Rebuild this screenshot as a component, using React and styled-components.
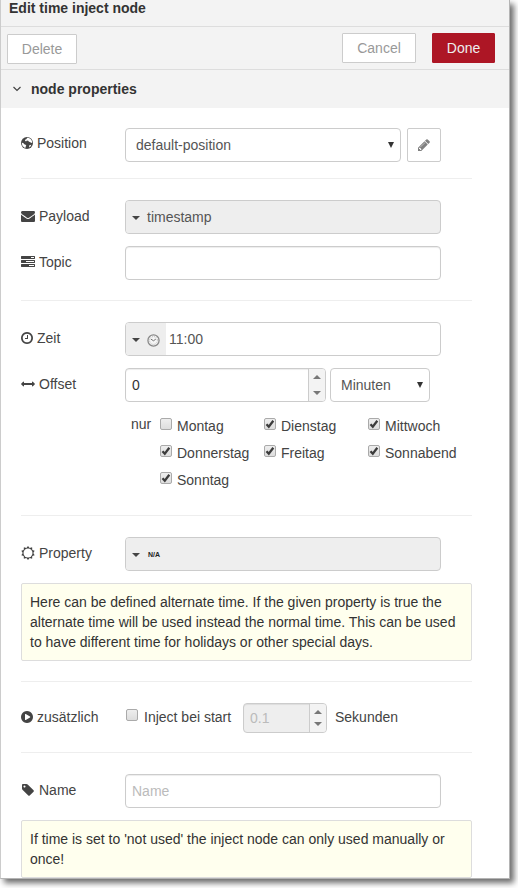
import React from 'react';
import styled, { createGlobalStyle, css } from 'styled-components';

const GlobalStyle = createGlobalStyle`
  *, *::before, *::after { box-sizing: border-box; }
  body {
    margin: 0;
    background: #fff;
    font: 14px/20px "Liberation Sans", Arial, sans-serif;
    color: #444;
    overflow: hidden;
  }
`;

const Panel = styled.main`
  width: 510px;
  height: 879px;
  overflow: hidden;
  background: #fff;
  border: 1px solid #ccc;
  border-top: 0;
  border-right-color: #b4b4b4;
  border-bottom-color: #b4b4b4;
`;

const Stage = styled.div`
  width: 518px;
  height: 888px;
  overflow: hidden;
  ${Panel} { box-shadow: 4px 4px 6px rgba(0, 0, 0, 0.58); }
`;

const Title = styled.h1`
  margin: 0;
  height: 27px;
  padding: 0 8px;
  background: #f3f3f3;
  border-bottom: 1px solid #ddd;
  font-size: 14px;
  line-height: 17px;
  color: #333;
`;

const Toolbar = styled.div`
  display: flex;
  height: 43px;
  padding: 6px 14px 0 6px;
  background: #f3f3f3;
  border-bottom: 1px solid #ddd;
`;

const Button = styled.button`
  width: ${(p) => p.$width}px;
  height: 30px;
  margin: ${(p) => p.$margin || '0'};
  padding: 0;
  font: inherit;
  color: ${(p) => (p.$primary ? '#eee' : '#999')};
  background: ${(p) => (p.$primary ? '#ad1625' : '#fff')};
  border: 1px solid ${(p) => (p.$primary ? '#ad1625' : '#ccc')};
  border-radius: 1px;
`;

const SectionHeader = styled.h2`
  display: flex;
  align-items: center;
  gap: 8px;
  margin: 0;
  height: 38px;
  padding-left: 10px;
  background: #f3f3f3;
  font-size: 14px;
  color: #333;
`;

const Form = styled.div`
  width: 471px;
  padding: 20px 0 0 20px;
`;

const Row = styled.div`
  display: flex;
  height: ${(p) => p.$height || 34}px;
  margin-bottom: 12px;
`;

const Label = styled.label`
  display: flex;
  align-items: center;
  flex: none;
  width: 104px;
  height: ${(p) => p.$height || 32}px;
  gap: 4px;
`;

const Divider = styled.hr`
  height: 1px;
  margin: ${(p) => p.$top || 20}px 0 21px;
  border: 0;
  background: #eee;
`;

const field = css`
  display: flex;
  align-items: center;
  width: ${(p) => p.$width || 316}px;
  height: ${(p) => p.$height || 34}px;
  border: 1px solid #ccc;
  border-radius: 4px;
  overflow: hidden;
  color: #555;
`;

const Select = styled.div`
  ${field}
  justify-content: space-between;
  padding: 0 6px 0 10px;
  margin-left: ${(p) => p.$gap || 0}px;
`;

const TextField = styled.div`
  ${field}
  padding: 0 6px;
  color: ${(p) => (p.$placeholder ? '#bbb' : '#333')};
  box-shadow: inset 0 1px 1px rgba(0, 0, 0, 0.075);
`;

const TypedField = styled.div`
  ${field}
  background: ${(p) => (p.$filled ? '#eee' : '#fff')};
`;

const TypeToggle = styled.span`
  display: flex;
  align-items: center;
  gap: 7px;
  height: 100%;
  padding: 2px ${(p) => (p.$plain ? 7 : 6)}px 0 6px;
  margin-right: ${(p) => (p.$plain ? 0 : 3)}px;
  background: #eee;
`;

const TinyText = styled.span`
  margin: 2px 0 0 1px;
  color: #222;
  font-size: 7px;
  font-weight: bold;
  line-height: 10px;
`;

const IconButton = styled.button`
  display: grid;
  place-items: center;
  width: 34px;
  height: 34px;
  margin-left: 6px;
  padding: 0;
  background: #fff;
  border: 1px solid #ccc;
  border-radius: 2px;
  color: #808080;
`;

const Spinner = styled.div`
  ${field}
  margin-left: ${(p) => p.$gap || 0}px;
  background: ${(p) => (p.$disabled ? '#eee' : '#fff')};
  color: ${(p) => (p.$disabled ? '#bbb' : '#333')};
  box-shadow: inset 0 1px 1px rgba(0, 0, 0, 0.075);
`;

const SpinnerValue = styled.span`
  flex: 1;
  padding-left: 6px;
`;

const SpinnerButtons = styled.span`
  display: flex;
  flex-direction: column;
  align-items: center;
  justify-content: space-between;
  width: 17px;
  height: 100%;
  padding: 6px 1px 6px 0;
  background: #f3f3f3;
  border-left: 1px solid #ccc;
`;

const Days = styled.div`
  display: grid;
  grid-template-columns: 29px 104px 104px 104px;
  grid-auto-rows: 27px;
  height: 81px;
  margin-left: 110px;
`;

const DayPrefix = styled.span``;

const DayLabel = styled.label`
  display: flex;
  align-items: flex-start;
  gap: 5px;
  grid-column: ${(p) => p.$column};
  padding-top: 2px;
`;

const Box = styled.span`
  display: grid;
  place-items: center;
  flex: none;
  width: 12px;
  height: 12px;
  margin-top: 2px;
  border: 1px solid #aaa;
  border-radius: 2px;
  background: linear-gradient(#eee, #ddd);
`;

const StartLabel = styled.label`
  display: flex;
  width: 119px;
  gap: 6px;
  padding: 4px 0 0 1px;
  white-space: nowrap;
`;

const Unit = styled.span`
  padding: 4px 0 0 8px;
`;

const Notice = styled.p`
  width: 451px;
  margin: 0;
  padding: 8px;
  background: #ffe;
  border: 1px solid #ddd;
  border-radius: 2px;
  color: #333;
  white-space: nowrap;
`;

const Svg = styled.svg`
  display: block;
  flex: none;
  fill: currentColor;
`;

const PATHS = {
  clock: 'M1024 544v448q0 14-9 23t-23 9h-320q-14 0-23-9t-9-23v-64q0-14 9-23t23-9h224v-352q0-14 9-23t23-9h64q14 0 23 9t9 23zm416 352q0-148-73-273t-198-198-273-73-273 73-198 198-73 273 73 273 198 198 273 73 273-73 198-198 73-273zm224 0q0 209-103 385.5t-279.5 279.5-385.5 103-385.5-103-279.5-279.5-103-385.5 103-385.5 279.5-279.5 385.5-103 385.5 103 279.5 279.5 103 385.5z',
  envelope: 'M1792 710v794q0 66-47 113t-113 47h-1472q-66 0-113-47t-47-113v-794q44 49 101 87 362 246 497 345 57 42 92.5 65.5t94.5 48 110 24.5h2q51 0 110-24.5t94.5-48 92.5-65.5q170-123 498-345 57-39 100-87zm0-294q0 79-49 151t-122 123q-376 261-468 325-10 7-42.5 31t-54 38.5-52 32.5-57.5 27-50 9h-2q-23 0-50-9t-57.5-27-52-32.5-54-38.5-42.5-31q-91-64-262-182.5t-205-142.5q-62-42-117-115.5t-55-136.5q0-78 41.5-130t118.5-52h1472q65 0 112.5 47t47.5 113z',
  tasks: 'M1024 1408h640v-128h-640v128zm-384-512h1024v-128h-1024v128zm640-512h384v-128h-384v128zm512 832v256q0 26-19 45t-45 19h-1664q-26 0-45-19t-19-45v-256q0-26 19-45t45-19h1664q26 0 45 19t19 45zm0-512v256q0 26-19 45t-45 19h-1664q-26 0-45-19t-19-45v-256q0-26 19-45t45-19h1664q26 0 45 19t19 45zm0-512v256q0 26-19 45t-45 19h-1664q-26 0-45-19t-19-45v-256q0-26 19-45t45-19h1664q26 0 45 19t19 45z',
  arrows: 'M1792 896q0 26-19 45l-256 256q-19 19-45 19t-45-19-19-45v-128h-1024v128q0 26-19 45t-45 19-45-19l-256-256q-19-19-19-45t19-45l256-256q19-19 45-19t45 19 19 45v128h1024v-128q0-26 19-45t45-19 45 19l256 256q19 19 19 45z',
  play: 'M896 128q209 0 385.5 103t279.5 279.5 103 385.5-103 385.5-279.5 279.5-385.5 103-385.5-103-279.5-279.5-103-385.5 103-385.5 279.5-279.5 385.5-103zm384 823q32-18 32-55t-32-55l-544-320q-31-19-64-1-32 19-32 56v640q0 37 32 56 16 8 32 8 17 0 32-9z',
  tag: 'M576 448q0-53-37.5-90.5t-90.5-37.5-90.5 37.5-37.5 90.5 37.5 90.5 90.5 37.5 90.5-37.5 37.5-90.5zm1067 576q0 53-37 90l-491 492q-39 37-91 37-53 0-90-37l-715-716q-38-37-64.5-101t-26.5-117v-416q0-52 38-90t90-38h416q53 0 117 26.5t102 64.5l715 714q37 39 37 91z',
  pencil: 'M491 1536l91-91-235-235-91 91v107h128v128h107zm523-928q0-22-22-22-10 0-17 7l-542 542q-7 7-7 17 0 22 22 22 10 0 17-7l542-542q7-7 7-17zm-54-192l416 416-832 832h-416v-416zm683 96q0 53-37 90l-166 166-416-416 166-165q36-38 90-38 53 0 91 38l235 234q37 39 37 91z',
};

const Icon = ({ name, narrow }) => (
  <Svg width={narrow ? 12 : 14} height="14" viewBox={narrow ? '128 0 1536 1792' : '0 0 1792 1792'}>
    <path d={PATHS[name]} />
  </Svg>
);

const Globe = () => (
  <Svg width="12" height="14" viewBox="0 -1 12 14">
    <circle cx="6" cy="6" r="6" />
    <path fill="#fff" d="M6.300.7 8 1l1.900 1.200 1.100 1.900.3 1.500-1.200.3-1-.9-1.200-.2-.6-1-1.400-.2-.9.8-1.100-.8.8-1.300 1.300-.3-.5-.7z" />
    <path fill="#fff" d="m.8 5.800 1.400.2 1.100 1.200 1.300.5.7 1-.7 1.100-.2 1.300-1.500-.8L1.300 8.600zM8.300 8.300l2-.6-.8 1.800-1.400 1z" />
  </Svg>
);

const SUN_POINTS = Array.from({ length: 20 }, (_, i) => {
  const r = i % 2 ? 5.3 : 7;
  const a = (i * Math.PI) / 10;
  return `${(7 + r * Math.sin(a)).toFixed(2)},${(7 - r * Math.cos(a)).toFixed(2)}`;
}).join(' ');

const Sun = () => (
  <Svg width="14" height="14" viewBox="0 0 14 14">
    <polygon points={SUN_POINTS} />
    <circle cx="7" cy="7" r="4.5" fill="#fff" />
  </Svg>
);

const Chevron = () => (
  <Svg width="12" height="8" viewBox="0 0 12 8">
    <path d="m2.5 2 3.5 3.5L9.500 2" fill="none" stroke="#444" strokeWidth="1.2" />
  </Svg>
);

const Caret = () => (
  <Svg width="8" height="4" viewBox="0 0 8 4"><path d="M0 0h8L4 4z" fill="#444" /></Svg>
);

const SelectArrow = () => (
  <Svg width="6" height="8" viewBox="0 0 6 8"><path d="M0 1h6L3 7z" fill="#333" /></Svg>
);

const Step = ({ down }) => (
  <Svg width="8" height="4" viewBox="0 0 8 4">
    <path d={down ? 'M0 0h8L4 4z' : 'M0 4h8L4 0z'} fill="#777" />
  </Svg>
);

const ClockFace = () => (
  <Svg width="13" height="13" viewBox="0 0 14 14">
    <circle cx="7" cy="7" r="6" fill="#f5f5f5" stroke="#888" strokeWidth="1.400" />
    <circle cx="7" cy="7" r="4.200" fill="none" stroke="#999" strokeWidth="1" strokeDasharray=".8 1.4" />
    <path d="M4.200 5.500 7 7.300l2.500-1.800" fill="none" stroke="#666" strokeWidth="1" />
  </Svg>
);

const Checkbox = ({ checked }) => (
  <Box>
    {checked && (
      <Svg width="10" height="10" viewBox="0 0 10 10">
        <path d="m1.500 5.200 2.300 2.500L8.300 1.800" fill="none" stroke="#3c3c3c" strokeWidth="2.300" />
      </Svg>
    )}
  </Box>
);

const Stepper = ({ value, ...rest }) => (
  <Spinner {...rest}>
    <SpinnerValue>{value}</SpinnerValue>
    <SpinnerButtons><Step /><Step down /></SpinnerButtons>
  </Spinner>
);

const DAYS = [
  ['Montag', false], ['Dienstag', true], ['Mittwoch', true],
  ['Donnerstag', true], ['Freitag', true], ['Sonnabend', true],
  ['Sonntag', true],
];

export default function App() {
  return (
    <Stage>
      <GlobalStyle />
      <Panel>
        <Title>Edit time inject node</Title>
        <Toolbar>
          <Button $width={70} $margin="1px auto 0 0">Delete</Button>
          <Button $width={74} $margin="0 16px 0 0">Cancel</Button>
          <Button $width={63} $primary>Done</Button>
        </Toolbar>
        <SectionHeader><Chevron />node properties</SectionHeader>
        <Form>
          <Row>
            <Label $height={30}><Globe />Position</Label>
            <Select $width={276}>default-position<SelectArrow /></Select>
            <IconButton aria-label="Edit position"><Icon name="pencil" narrow /></IconButton>
          </Row>
          <Divider $top={16} />
          <Row>
            <Label><Icon name="envelope" />Payload</Label>
            <TypedField $filled>
              <TypeToggle $plain><Caret /></TypeToggle>
              <span>timestamp</span>
            </TypedField>
          </Row>
          <Row>
            <Label><Icon name="tasks" />Topic</Label>
            <TextField />
          </Row>
          <Divider />
          <Row>
            <Label><Icon name="clock" narrow />Zeit</Label>
            <TypedField>
              <TypeToggle><Caret /><ClockFace /></TypeToggle>
              11:00
            </TypedField>
          </Row>
          <Row>
            <Label><Icon name="arrows" />Offset</Label>
            <Stepper value="0" $width={201} />
            <Select $width={100} $gap={4}>Minuten<SelectArrow /></Select>
          </Row>
          <Days>
            <DayPrefix>nur</DayPrefix>
            {DAYS.map(([day, checked], i) => (
              <DayLabel key={day} $column={(i % 3) + 2}>
                <Checkbox checked={checked} />{day}
              </DayLabel>
            ))}
          </Days>
          <Divider />
          <Row>
            <Label><Sun />Property</Label>
            <TypedField $filled>
              <TypeToggle $plain><Caret /></TypeToggle>
              <TinyText>N/A</TinyText>
            </TypedField>
          </Row>
          <Notice>
            Here can be defined alternate time. If the given property is true the<br />
            alternate time will be used instead the normal time. This can be used<br />
            to have different time for holidays or other special days.
          </Notice>
          <Divider />
          <Row $height={30}>
            <Label $height={28}><Icon name="play" narrow />zusätzlich</Label>
            <StartLabel><Checkbox />Inject bei start</StartLabel>
            <Stepper value="0.1" $width={84} $height={30} $gap={-1} $disabled />
            <Unit>Sekunden</Unit>
          </Row>
          <Divider $top={19} />
          <Row>
            <Label><Icon name="tag" />Name</Label>
            <TextField $placeholder>Name</TextField>
          </Row>
          <Notice>
            If time is set to 'not used' the inject node can only used manually or<br />
            once!
          </Notice>
        </Form>
      </Panel>
    </Stage>
  );
}
